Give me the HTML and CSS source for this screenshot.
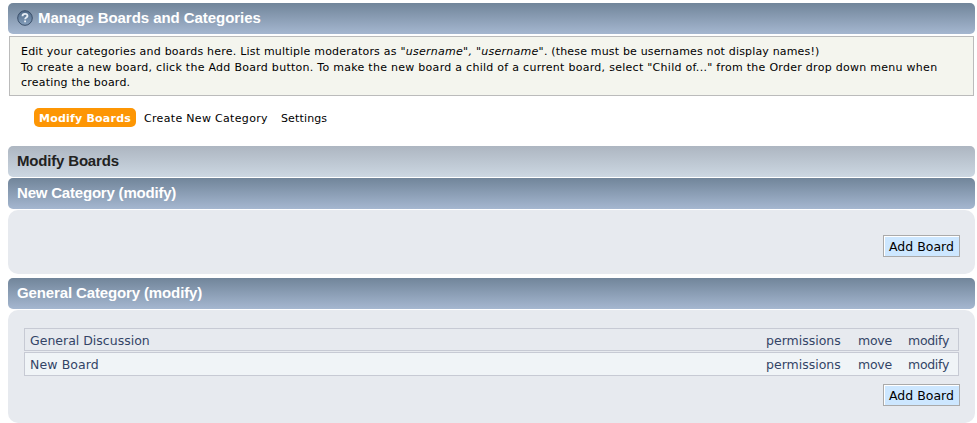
FILE: index.html
```html
<!DOCTYPE html>
<html lang="en">
<head>
<meta charset="utf-8">
<title>Manage Boards and Categories</title>
<link rel="stylesheet" href="styles.css">
</head>
<body>
<header class="bar">
  <svg class="help" viewBox="0 0 16 16" width="16" height="16" aria-hidden="true">
    <defs><linearGradient id="g" x1="0" y1="0" x2="0" y2="1"><stop offset="0" stop-color="#506a88"/><stop offset="1" stop-color="#86a0bd"/></linearGradient></defs>
    <circle cx="8" cy="8" r="7.3" fill="url(#g)" stroke="#3a4f6a" stroke-width="1"/>
    <path d="M5.500 6.200c0-1.600 1.100-2.400 2.500-2.400s2.500.8 2.500 2.100c0 1.600-2.400 1.600-2.400 3.300M8.100 10.400v1.800" fill="none" stroke="#e6edf5" stroke-width="1.800"/>
  </svg>
  <h1>Manage Boards and Categories</h1>
</header>
<section class="info">
  <p><span class="l1">Edit your categories and boards here. List multiple moderators as <em>"username", "username"</em><span class="note">. (these must be usernames not display names!)</span></span><br><span class="l2">To create a new board, click the Add Board button. To make the new board a child of a current board, select "Child of..." from the Order drop down menu when</span><br><span class="l3">creating the board.</span></p>
</section>
<nav class="tabs">
  <a class="active">Modify Boards</a>
  <a class="create">Create New Category</a>
  <a class="settings">Settings</a>
</nav>
<main>
  <div class="bar light"><h2>Modify Boards</h2></div>
  <div class="bar"><h3>New Category (modify)</h3></div>
  <section class="panel first"><button>Add Board</button></section>
  <div class="bar"><h3 class="general">General Category (modify)</h3></div>
  <section class="panel second">
    <ul>
      <li><a class="name">General Discussion</a><a class="perm">permissions</a><a class="move">move</a><a class="modify">modify</a></li>
      <li class="alt"><a class="name">New Board</a><a class="perm">permissions</a><a class="move">move</a><a class="modify">modify</a></li>
    </ul>
    <button>Add Board</button>
  </section>
</main>
</body>
</html>
```
FILE: styles.css
```css
* { box-sizing: border-box; }
body {
  margin: 0;
  padding: 3px 2px 0 8px;
  height: 423px;
  overflow: hidden;
  background: #fff;
  color: #000;
  font-family: Verdana, "DejaVu Sans", sans-serif;
  font-size: 11px;
}
h1, h2, h3, p, ul { margin: 0; padding: 0; }
.bar {
  display: flex;
  align-items: center;
  height: 31px;
  padding: 0 9px 1px;
  border-radius: 5px;
  background: linear-gradient(#71859a, #a5b7d0);
  color: #fff;
}
.bar h1, .bar h2, .bar h3 {
  font: bold 15px/20px Arial, "Liberation Sans", sans-serif;
  white-space: nowrap;
}
.bar h1 { letter-spacing: -0.05px; }
.bar h2 { letter-spacing: -0.18px; }
.bar h3 { letter-spacing: -0.2px; }
.bar .general { letter-spacing: -0.13px; }
.light { background: linear-gradient(#adb6c1, #ccd7e2); color: #222; }
.help { margin-right: 5px; }
.info {
  height: 60px;
  margin: 2px 1px 0;
  padding: 7px 11px 0;
  border: 1px solid #bbb;
  background: #f4f5ee;
}
.info p { line-height: 15.5px; white-space: nowrap; }
.l1 { letter-spacing: 0.21px; }
.l1 em { letter-spacing: 0.27px; }
.l1 .note { letter-spacing: 0.17px; }
.l2 { letter-spacing: 0.277px; }
.l3 { letter-spacing: 0.2px; }
.tabs {
  display: flex;
  align-items: center;
  height: 19px;
  margin: 12px 0 19px 26px;
}
.tabs a { height: 19px; padding-top: 2px; line-height: 17px; white-space: nowrap; }
.tabs .active {
  width: 102px;
  padding-left: 5px;
  border-radius: 5px;
  background: #fd9604;
  color: #fff;
  font-weight: bold;
  letter-spacing: 0.22px;
}
.tabs .create { width: 145px; padding-left: 8px; letter-spacing: 0.32px; }
.tabs .settings { letter-spacing: 0.14px; }
main { display: grid; row-gap: 1px; }
.panel {
  display: flex;
  flex-direction: column;
  align-items: flex-end;
  padding: 0 15px 0 16px;
  border-radius: 10px;
  background: #e7eaef;
}
.first { height: 64px; padding-top: 25px; margin-bottom: 3px; }
.second { height: 113px; padding-top: 18px; }
button {
  width: 77px;
  height: 22px;
  padding: 1px 0 0;
  border: 1px solid #aaa;
  background: #cde7ff;
  box-shadow: inset 1px 1px 0 #fff;
  color: #000;
  font: 12.5px/19px Verdana, "DejaVu Sans", sans-serif;
  white-space: nowrap;
}
ul {
  width: 935px;
  margin: 0 1px 8px 0;
  list-style: none;
  color: #334466;
  font-size: 12.5px;
}
li {
  display: flex;
  align-items: center;
  height: 23px;
  margin-bottom: 1px;
  padding: 1px 0 0 5px;
  border: 1px solid #c7cad4;
}
li.alt { height: 24px; margin: 0; padding-top: 0; background: #f0f4f7; }
li .name { width: 736px; }
li.alt .name { letter-spacing: 0.1px; }
li .perm { width: 92px; }
li .move { width: 50px; letter-spacing: -0.25px; }
li .modify { letter-spacing: -0.3px; }
```
